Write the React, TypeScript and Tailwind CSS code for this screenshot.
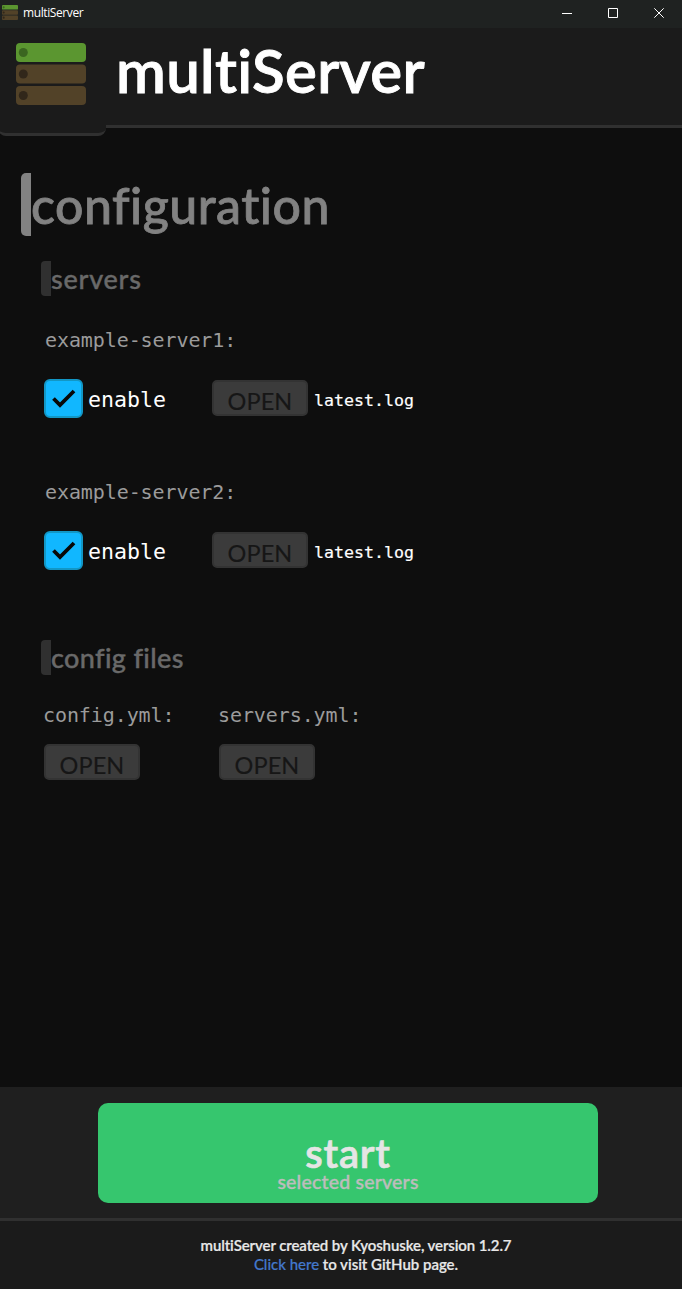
import React from "react";

const mono = "font-['DejaVu_Sans_Mono','Liberation_Mono',monospace]";

function ServerLogo({ className }: { className: string }) {
  return (
    <svg className={className} viewBox="0 0 70 62" preserveAspectRatio="none">
      <rect width="70" height="19" rx="4" fill="#5b9630" />
      <rect y="21.5" width="70" height="19" rx="4" fill="#524228" />
      <rect y="43" width="70" height="19" rx="4" fill="#524228" />
      <circle cx="7.3" cy="9.5" r="4.5" fill="#3b6620" />
      <circle cx="7.3" cy="31" r="4.5" fill="#31271a" />
      <circle cx="7.3" cy="52.5" r="4.5" fill="#31271a" />
    </svg>
  );
}

function OpenButton({ className = "" }: { className?: string }) {
  return (
    <button className={`flex h-9 w-24 items-center justify-center rounded-[5px] border-2 border-[#333333] bg-[#3b3b3b] pt-[7px] text-[23.5px] leading-none tracking-[0.1px] text-[#161616] [-webkit-text-stroke:0.15px_#161616] ${className}`}>
      OPEN
    </button>
  );
}

function SubHeading({ text, className }: { text: string; className: string }) {
  return (
    <h2 className={`ml-[41px] flex h-[35px] w-fit items-center rounded-[4px] border-l-[10px] border-[#303030] text-[27px] leading-none font-medium whitespace-nowrap text-[#696969] [-webkit-text-stroke:0.4px_#696969] ${className}`}>
      {text}
    </h2>
  );
}

function ServerRow({ name }: { name: string }) {
  return (
    <section className="h-[152px] pl-11">
      <div className={`${mono} h-6 pl-px text-[20px] leading-6 tracking-[-0.09px] text-[#9b9b9b]`}>{name}</div>
      <div className="mt-[27px] flex items-center">
        <span className="flex size-[39px] items-center justify-center rounded-[6px] border-2 border-[#1297c6] bg-[#11b7ff]">
          <svg className="size-6" viewBox="0 0 24 24" fill="none" stroke="#080808" strokeWidth="3.8">
            <path d="M1.5 11.5 8 18 22 4" />
          </svg>
        </span>
        <span className={`${mono} ml-[5px] w-[124px] pt-[2px] text-[21.6px] leading-7 text-white`}>enable</span>
        <OpenButton className="-mt-px" />
        <span className={`${mono} ml-1.5 pt-[5px] text-[16.6px] leading-6 text-white [-webkit-text-stroke:0.2px_white]`}>latest.log</span>
      </div>
    </section>
  );
}

function ConfigFile({ name }: { name: string }) {
  return (
    <div className="w-[175px]">
      <div className={`${mono} -ml-px h-6 text-[20px] leading-6 tracking-[-0.09px] text-[#9b9b9b]`}>{name}</div>
      <div className="mt-[17px]">
        <OpenButton />
      </div>
    </div>
  );
}

export default function App() {
  return (
    <div className="flex h-[1289px] w-[682px] flex-col overflow-hidden bg-[#0e0e0e] font-[Lato,sans-serif]">
      <div className="flex h-7 shrink-0 items-center bg-[#1f2221] pl-0.5">
        <ServerLogo className="mb-1 h-[15px] w-4" />
        <span className="ml-[5px] pb-0.5 font-['Open_Sans',sans-serif] text-[12px] leading-4 tracking-[-0.4px] text-white">multiServer</span>
        <svg className="ml-auto h-7 w-[138px]" viewBox="0 0 138 28" fill="none" stroke="white">
          <path d="M18 13.5h10M64.5 8.5h9v9h-9zM110.3 8.3l9.4 9.4M119.7 8.3l-9.4 9.4" />
        </svg>
      </div>
      <header className="flex h-[108px] shrink-0 items-start">
        <div className="-ml-[2px] h-[108px] w-[108px] rounded-b-[8px] border-b-[3px] border-[#303030] bg-[#1b1b1b] pt-[15px] pl-[18px]">
          <ServerLogo className="h-[62px] w-[70px]" />
        </div>
        <div className="h-[100px] flex-1 border-b-[3px] border-[#303030] bg-[#1b1b1b]">
          <h1 className="pt-[4px] pl-[10px] text-[60px] leading-[76px] font-semibold tracking-[0.3px] text-white [-webkit-text-stroke:0.9px_white]">multiServer</h1>
        </div>
      </header>
      <main className="flex-1">
        <h1 className="mt-[37px] ml-[21px] h-[63px] w-fit rounded-[5px] border-l-[10px] border-[#828282] text-[50px] leading-[64px] font-medium tracking-[0.48px] text-[#828282] [-webkit-text-stroke:0.8px_#828282]">configuration</h1>
        <SubHeading text="servers" className="mt-[25px] tracking-[0.75px]" />
        <div className="mt-8">
          <ServerRow name="example-server1:" />
          <ServerRow name="example-server2:" />
        </div>
        <SubHeading text="config files" className="mt-2 tracking-[0.36px]" />
        <div className="mt-7 flex pl-11">
          <ConfigFile name="config.yml:" />
          <ConfigFile name="servers.yml:" />
        </div>
      </main>
      <div className="h-[131px] shrink-0 bg-[#1f1f1f] pt-4 pl-[98px]">
        <button className="flex h-[100px] w-[500px] flex-col items-center rounded-[10px] bg-[#36c66e] pt-[32px]">
          <span className="h-9 text-[40px] leading-[37px] font-semibold tracking-[0.8px] text-[#e5e5e5] [-webkit-text-stroke:0.7px_#e5e5e5]">start</span>
          <span className="text-[19.5px] leading-[21px] font-medium tracking-[0.2px] text-[#bdbdbd] [-webkit-text-stroke:0.4px_#bdbdbd]">selected servers</span>
        </button>
      </div>
      <footer className="flex h-[71px] shrink-0 flex-col items-center border-t-[3px] border-[#303030] bg-[#1b1b1b] pt-[15px] pl-[30px] text-[15px] leading-[19px] font-semibold text-[#e8e8e8]">
        <p className="tracking-[-0.1px] [-webkit-text-stroke:0.2px_#e8e8e8]">multiServer created by Kyoshuske, version 1.2.7</p>
        <p className="tracking-[-0.02px]"><a className="font-medium text-[#4378cc] [-webkit-text-stroke:0.2px_#4378cc]">Click here</a> <span className="[-webkit-text-stroke:0.2px_#e8e8e8]">to visit GitHub page.</span></p>
      </footer>
    </div>
  );
}
